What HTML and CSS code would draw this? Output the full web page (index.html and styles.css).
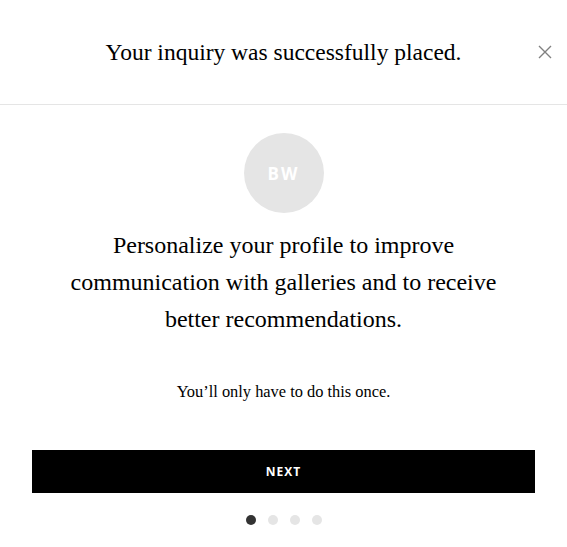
FILE: index.html
```html
<!DOCTYPE html>
<html>
<head>
<meta charset="utf-8">
<link rel="stylesheet" href="styles.css">
</head>
<body>
<div class="modal">
  <header class="header">
    <h1 class="title">Your inquiry was successfully placed.</h1>
    <button class="close" aria-label="Close">
      <svg width="14" height="14" viewBox="0 0 14 14"><path d="M1 1L13 13M13 1L1 13" stroke="#808080" stroke-width="1.4" fill="none"/></svg>
    </button>
  </header>
  <main class="content">
    <div class="avatar">BW</div>
    <p class="lead">Personalize your profile to improve communication with galleries and to receive better recommendations.</p>
    <p class="note">You’ll only have to do this once.</p>
    <button class="next">NEXT</button>
    <div class="dots">
      <span class="dot active"></span>
      <span class="dot"></span>
      <span class="dot"></span>
      <span class="dot"></span>
    </div>
  </main>
</div>
</body>
</html>
```
FILE: styles.css
```css
html, body {
  margin: 0;
  padding: 0;
  background: #fff;
}
body {
  font-family: "Liberation Serif", "Times New Roman", serif;
  color: #000;
}
.modal {
  width: 567px;
}
.header {
  position: relative;
  height: 104px;
  border-bottom: 1px solid #e5e5e5;
  display: flex;
  align-items: center;
  justify-content: center;
}
.title {
  margin: 0;
  font-weight: normal;
  font-size: 23.5px;
  line-height: 30px;
}
.close {
  position: absolute;
  right: 15px;
  top: 45px;
  width: 14px;
  height: 14px;
  padding: 0;
  border: 0;
  background: none;
  display: flex;
}
.content {
  display: flex;
  flex-direction: column;
  align-items: center;
  padding: 28px 32px 0;
}
.avatar {
  width: 80px;
  height: 80px;
  border-radius: 50%;
  background: #e5e5e5;
  color: #fff;
  font-family: "Open Sans", sans-serif;
  font-size: 17px;
  font-weight: 700;
  letter-spacing: 2px;
  display: flex;
  align-items: center;
  justify-content: center;
}
.lead {
  margin: 14px 0 0;
  text-align: center;
  font-size: 24px;
  line-height: 37px;
  width: 450px;
}
.note {
  margin: 42px 0 0;
  font-size: 16.4px;
  line-height: 24px;
}
.next {
  margin-top: 46px;
  width: 503px;
  height: 43px;
  border: 0;
  background: #000;
  color: #fff;
  font-family: "Open Sans", sans-serif;
  font-weight: 700;
  font-size: 12px;
  letter-spacing: 1px;
}
.dots {
  margin-top: 22px;
  display: flex;
  gap: 12px;
}
.dot {
  width: 10px;
  height: 10px;
  border-radius: 50%;
  background: #e5e5e5;
}
.dot.active {
  background: #333;
}
```
